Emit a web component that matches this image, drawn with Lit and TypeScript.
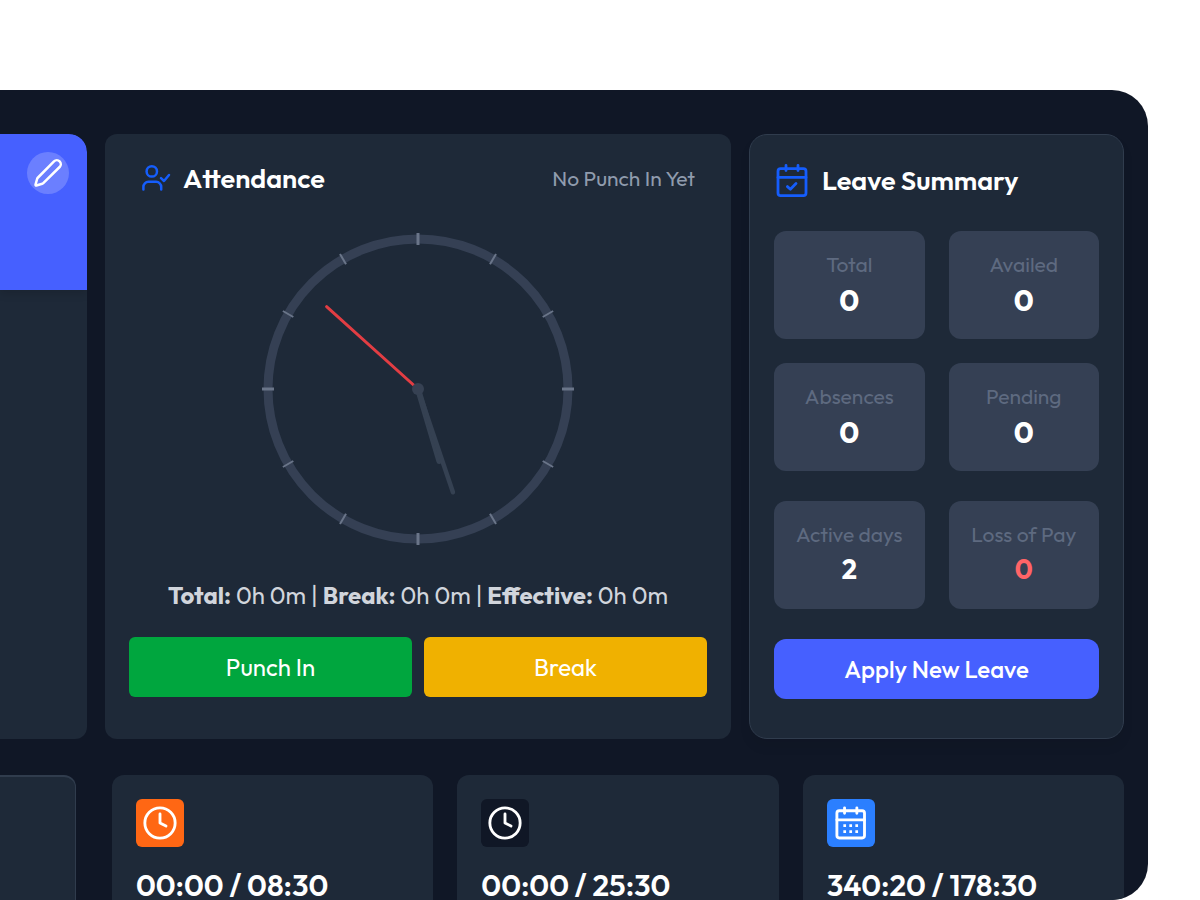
import { LitElement, html, css, svg } from "lit";
import { customElement } from "lit/decorators.js";

const tiles = [
  [["Total", "0", ""], ["Availed", "0", ""], ["Absences", "0", ""], ["Pending", "0", ""]],
  [["Active days", "2", "small"], ["Loss of Pay", "0", "small loss"]],
];

const clockIcon = html`<svg class="glyph" viewBox="0 0 24 24" width="36" height="36" aria-hidden="true"><circle cx="12" cy="12" r="10.1"/><path d="M12 6v6l4 2"/></svg>`;
const calendarIcon = html`<svg class="glyph" viewBox="0 0 24 24" width="36" height="36" aria-hidden="true"><rect x="2.6" y="3.8" width="18.4" height="18.2" rx="1.6"/><path d="M7.7 1.9v3.6M15.9 1.9v3.6M2.6 9.9h18.4"/><path class="dots" d="M6.9 13.8h1.8M10.9 13.8h1.8M14.9 13.8h1.8M6.9 17.8h1.8M10.9 17.8h1.8M14.9 17.8h1.8"/></svg>`;

const stats = [
  { tone: "orange", icon: clockIcon, value: "00:00 / 08:30" },
  { tone: "dark", icon: clockIcon, value: "00:00 / 25:30" },
  { tone: "blue", icon: calendarIcon, value: "340:20 / 178:30" },
];

@customElement("app-root")
export class AppRoot extends LitElement {
  static styles = css`
    :host { display: block; background: #fff; font-family: Outfit, Lato, sans-serif; color: #fff; }
    * { box-sizing: border-box; }
    h2, p { margin: 0; }
    button { font: inherit; color: inherit; border: 0; padding: 0; cursor: pointer; }
    svg { display: block; fill: none; stroke-linecap: round; stroke-linejoin: round; }
    .page { height: 100vh; padding: 90px 52px 0 0; }
    .frame { height: 100%; overflow: hidden; background: #101726; border-radius: 0 36px 36px 0; padding: 44px 24px 0 0; display: flex; flex-direction: column; gap: 36px; }
    .top { display: grid; grid-template-columns: 87fr 626fr 375fr; gap: 18px; }
    .card { background: #1e2938; border-radius: 12px; min-width: 0; }
    .banner { height: 156px; background: #4660ff; border-radius: 0 18px 0 0; padding: 18px; display: flex; justify-content: flex-end; align-items: flex-start; box-shadow: 0 4px 8px rgba(0,0,0,.12); }
    .profile { border-radius: 0 18px 12px 0; overflow: hidden; }
    .edit { width: 42px; height: 42px; border-radius: 50%; background: rgba(255,255,255,.2); display: grid; place-items: center; flex: none; }
    .edit svg { stroke: #fff; stroke-width: 2; }
    .attendance { padding: 24px; }
    .head { display: flex; align-items: center; gap: 12px; height: 40px; padding: 0 12px; }
    .title { font-size: 27px; line-height: 36px; font-weight: 600; white-space: nowrap; }
    .head svg { stroke: #155dfc; flex: none; }
    .note { margin-left: auto; font-size: 21px; line-height: 30px; color: #8f9bad; white-space: nowrap; }
    .clock { margin: 34px auto 0; width: 314px; }
    .ring { stroke: #354054; stroke-width: 9; }
    .tick { stroke: #6a7589; stroke-width: 3; stroke-linecap: butt; }
    .tick.minor { stroke-width: 2; }
    .totals { margin-top: 31px; text-align: center; font-size: 24px; line-height: 36px; color: #d1d5dc; white-space: nowrap; }
    .actions { display: grid; grid-template-columns: 1fr 1fr; gap: 12px; margin-top: 24px; }
    .action { height: 60px; border-radius: 6px; font-size: 24px; }
    .go { background: #00a63e; }
    .pause { background: #f0b100; }
    .leave { border: 1px solid #303c4d; border-radius: 18px; padding: 24px 24px 39px; box-shadow: 0 8px 12px rgba(0,0,0,.06); }
    .leave .head { height: 42px; padding: 0; gap: 12px; }
    .groups { margin-top: 30px; display: grid; gap: 30px; }
    .tiles { display: grid; grid-template-columns: 1fr 1fr; gap: 24px; }
    .tile { height: 108px; background: #354054; border-radius: 12px; display: flex; flex-direction: column; align-items: center; padding-top: 18px; }
    .label { font-size: 21px; line-height: 30px; color: #5e6a80; white-space: nowrap; }
    .value { font-size: 30px; line-height: 42px; font-weight: 700; }
    .small .value { font-size: 27px; line-height: 40px; }
    .loss .value { color: #ff6467; }
    .apply { display: block; width: 100%; height: 60px; margin-top: 30px; background: #4660ff; border-radius: 12px; font-size: 24px; font-weight: 500; }
    .bottom { display: grid; grid-template-columns: 76fr 1012fr; gap: 36px; flex: 1 0 auto; }
    .blank { border: 1px solid #303c4d; border-left: 0; border-radius: 0 12px 0 0; border-top-width: 2px; }
    .stats { display: grid; grid-template-columns: repeat(3, 1fr); gap: 24px; }
    .stat { padding: 24px; }
    .badge { width: 48px; height: 48px; border-radius: 6px; display: grid; place-items: center; }
    .orange { background: #ff6714; }
    .dark { background: #101726; }
    .blue { background: #2b7fff; }
    .glyph { stroke: #fff; stroke-width: 1.9; }
    .dots { stroke-width: 1.8; stroke-linecap: butt; }
    .amount { margin-top: 24px; font-size: 30px; line-height: 29px; font-weight: 600; white-space: nowrap; }
  `;

  private hand(angle: number, length: number, width: number, color = "#354152") {
    return svg`<line x1="157" y1="157" x2="157" y2=${157 - length} stroke=${color} stroke-width=${width} transform=${`rotate(${angle} 157 157)`}/>`;
  }

  render() {
    return html`
      <main class="page"><div class="frame">
        <section class="top">
          <div class="card profile"><div class="banner">
            <button class="edit" aria-label="Edit profile"><svg viewBox="0 0 24 24" width="30" height="30"><path d="M21.3 7.2a2.9 2.9 0 0 0-4.5-4.5L3.842 15.8a2 2 0 0 0-.5.83L2.02 21.356a.5.5 0 0 0 .623.622l4.753-1.32a2 2 0 0 0 .83-.497z"/></svg></button>
          </div></div>
          <div class="card attendance">
            <div class="head">
              <svg viewBox="0 0 30 30" width="30" height="30" stroke-width="2.5" aria-hidden="true"><circle cx="10.8" cy="8.4" r="5.2"/><path d="M2.4 26.6v-2.8a5 5 0 0 1 5-5h7.8a5 5 0 0 1 5 5v2.8M20 15.2l3 2.8 5-6"/></svg>
              <h2 class="title">Attendance</h2><span class="note">No Punch In Yet</span>
            </div>
            <svg class="clock" viewBox="0 0 314 314" role="img" aria-label="Clock">
              <circle class="ring" cx="157" cy="157" r="150"/>
              ${Array.from({ length: 12 }, (_, i) => svg`<line class="tick ${i % 3 ? "minor" : ""}" x1="157" y1="1" x2="157" y2="13" transform=${`rotate(${i * 30} 157 157)`}/>`)}
              ${this.hand(163.5, 75, 6)}${this.hand(161.3, 109, 4.5)}${this.hand(312, 123, 3, "#e23d43")}
              <circle cx="157" cy="157" r="6" fill="#364153"/>
            </svg>
            <p class="totals"><b>Total:</b> 0h 0m | <b>Break:</b> 0h 0m | <b>Effective:</b> 0h 0m</p>
            <div class="actions"><button class="action go">Punch In</button><button class="action pause">Break</button></div>
          </div>
          <div class="card leave">
            <div class="head">
              <svg viewBox="0 0 36 36" width="36" height="36" stroke-width="2.8" aria-hidden="true"><rect x="4" y="6.6" width="28" height="27" rx="2.6"/><path d="M12 3.4v5.2M24 3.4v5.2M4 15.4h28M13.4 24.6l3 2.6 5.6-5.6"/></svg>
              <h2 class="title">Leave Summary</h2>
            </div>
            <div class="groups">${tiles.map((g) => html`<div class="tiles">${g.map(([label, value, kind]) => html`<div class="tile ${kind}"><span class="label">${label}</span><span class="value">${value}</span></div>`)}</div>`)}</div>
            <button class="apply">Apply New Leave</button>
          </div>
        </section>
        <section class="bottom">
          <div class="card blank"></div>
          <div class="stats">${stats.map((s) => html`<div class="card stat"><div class="badge ${s.tone}">${s.icon}</div><p class="amount">${s.value}</p></div>`)}</div>
        </section>
      </div></main>`;
  }
}
